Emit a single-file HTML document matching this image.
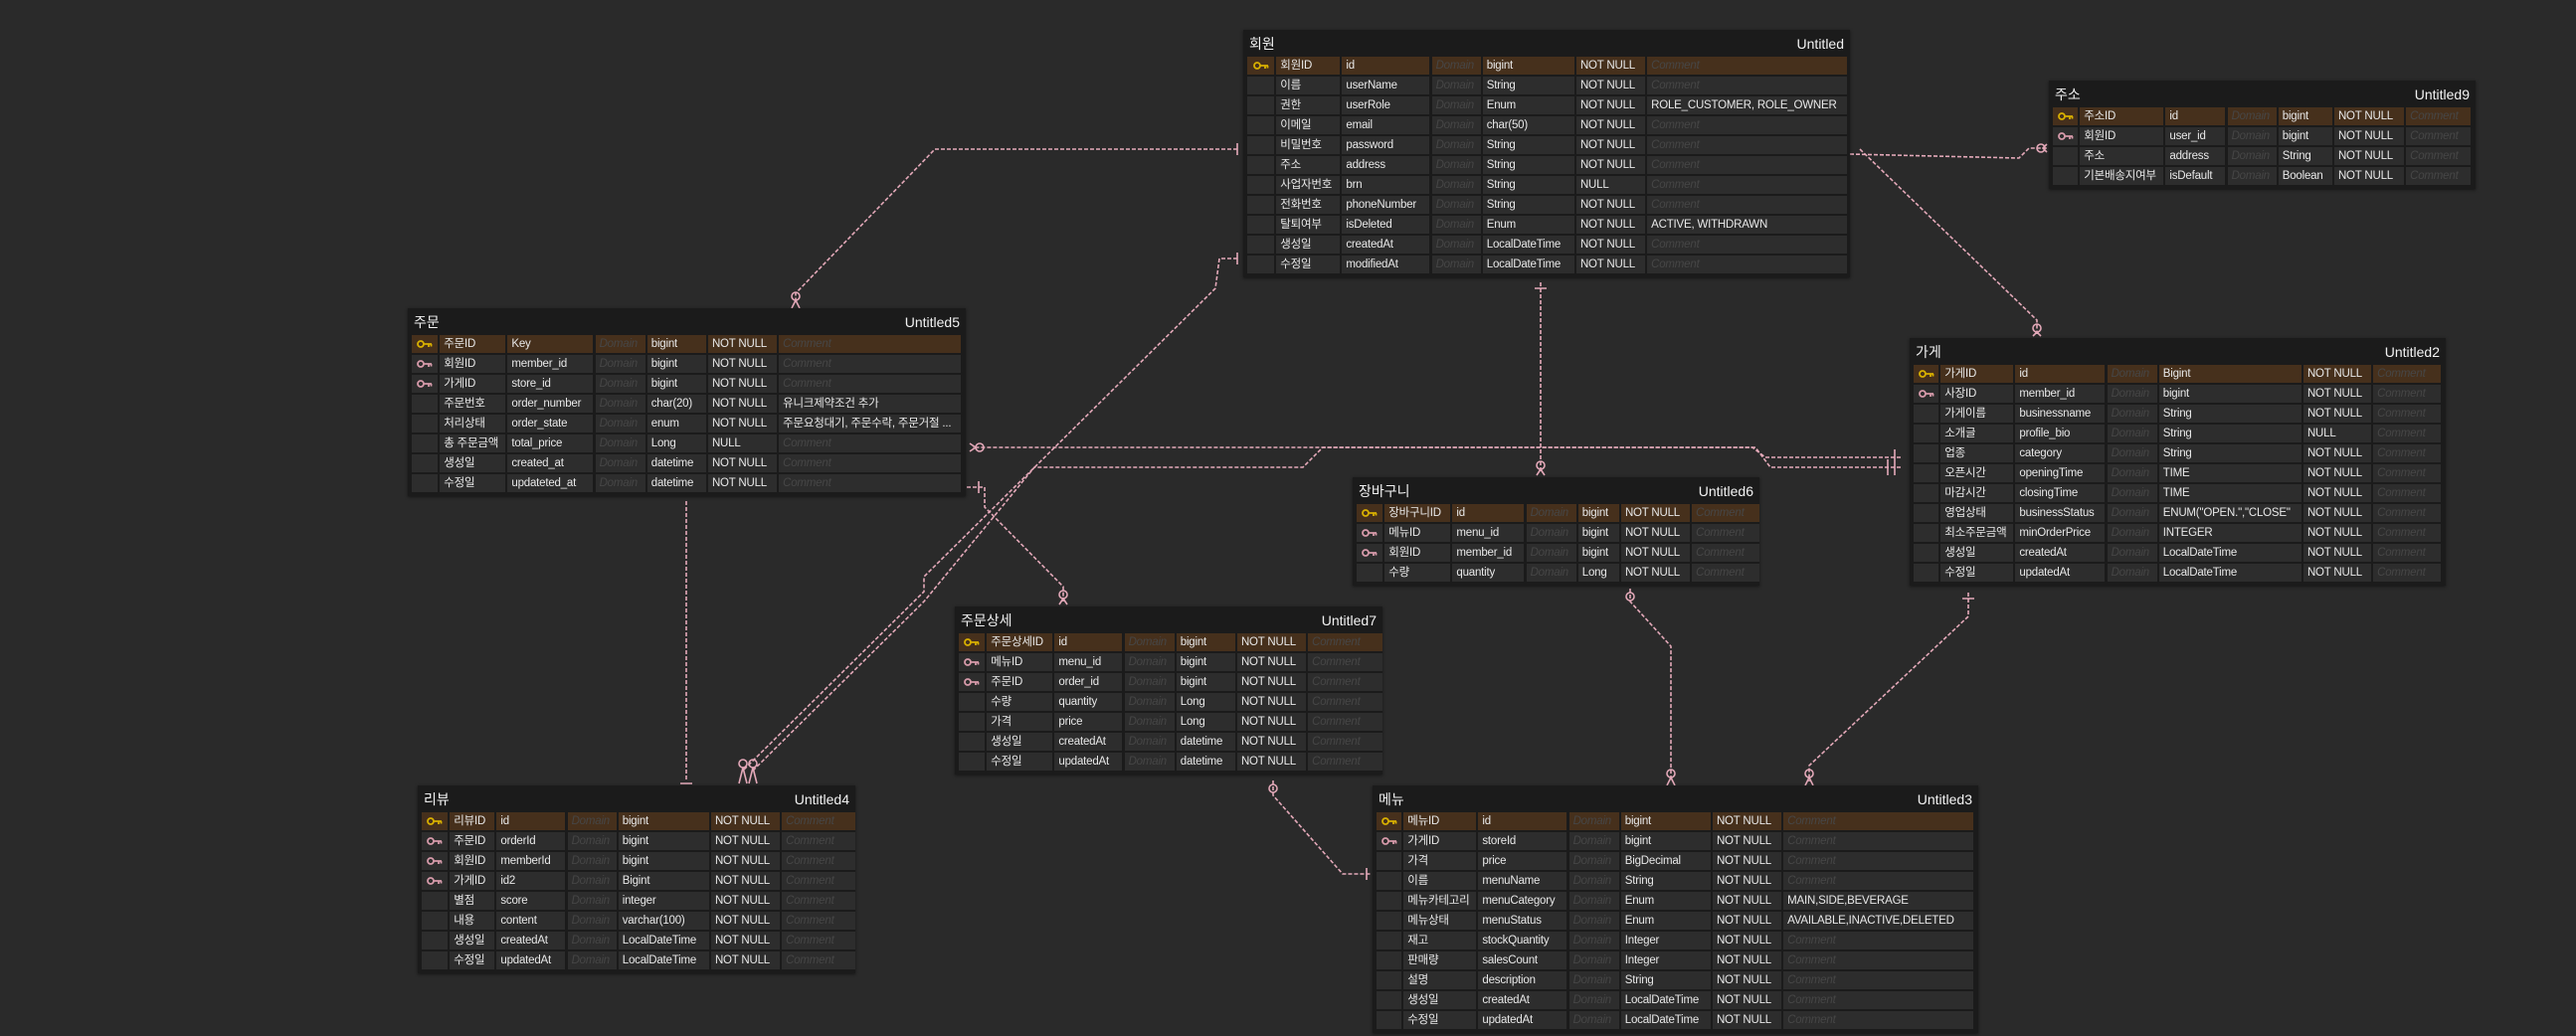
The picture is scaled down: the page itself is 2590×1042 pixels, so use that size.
<!DOCTYPE html>
<html><head><meta charset="utf-8">
<style>
html,body{margin:0;padding:0;}
body{width:2590px;height:1042px;background:#2a2a2a;position:relative;overflow:hidden;font-family:"Liberation Sans","Noto Sans CJK KR",sans-serif;}
svg.lines{position:absolute;left:0;top:0;z-index:0}
.t{position:absolute;background:#1b1b1b;z-index:1;box-shadow:0 1px 3px rgba(0,0,0,.5)}
.h{height:27px;display:flex;justify-content:space-between;align-items:center;padding:0 6px 0 6px;color:#f2f2f2;font-size:14px;box-sizing:border-box}
.g{display:grid;column-gap:2.2px;row-gap:2px;padding:0 3px 3px 4px;grid-auto-rows:18px}
.g div{background:#2d2d2d;color:#e8e8e8;font-size:11.5px;letter-spacing:-0.2px;line-height:18px;padding-left:4px;white-space:nowrap;overflow:hidden;box-sizing:border-box}
.g div.p{color:#464646;font-style:italic}
.g.pk0 div:nth-child(-n+7){background:#46301c}
.g div.ic{padding:0;display:flex;align-items:center;justify-content:center}
.k{color:#d8b000}.f{color:#d69aaa}
</style></head><body>
<svg class="lines" width="2590" height="1042" fill="none" stroke="#e4a9b9" stroke-width="1.6">
<g stroke-dasharray="4 2">
<path d="M1244 150 H940 L800 295 V303"/>
<path d="M1244 260 H1226 L1222 290 L929 580 V595 L747 775"/>
<path d="M1911 470 H1780 L1765 450 H1330 L1310 470 H1040 L929 605 L757 775"/>
<path d="M1911 460 H1775 L1762 450 H978"/>
<path d="M972 490 H990 V510 L1069 590 V605"/>
<path d="M1549 284 V476"/>
<path d="M1639 592 V605 L1680 650 V786"/>
<path d="M1979 596 V620 L1819 770 V786"/>
<path d="M1280 785 V800 L1350 879 H1378"/>
<path d="M690 504 V786"/>
<path d="M1860 155 L2030 159 L2040 149 H2058"/>
<path d="M1870 150 L2048 322 V336"/>
</g>
<g stroke-width="1.6">
<path d="M1244 144 V156 M1244 254 V266 M1854 148 V160 M1858 145 V165"/>
<path d="M1905 452 V468 M1905 463 V478 M1898 462 V478"/>
<path d="M684 498 H696 M684 788 H696 M984 484 V496 M1543 290 H1555 M1973 602 H1985 M1374 873 V885"/>
<circle cx="800" cy="298" r="4"/><circle cx="747" cy="768" r="4"/><circle cx="757" cy="768" r="4"/>
<circle cx="985" cy="450" r="4"/><circle cx="1069" cy="598" r="4"/><circle cx="1549" cy="468" r="4"/>
<circle cx="1639" cy="600" r="4"/><circle cx="1680" cy="778" r="4"/><circle cx="1819" cy="778" r="4"/>
<circle cx="1280" cy="793" r="4"/><circle cx="2048" cy="330" r="4"/><circle cx="2052" cy="149" r="4"/>
<path d="M796 310 L800 302 L804 310 M743 788 L747 772 L751 788 M753 788 L757 772 L761 788 M1065 608 L1069 602 L1073 608 M1545 478 L1549 472 L1553 478 M1676 790 L1680 782 L1684 790 M1815 790 L1819 782 L1823 790 M2044 338 L2048 334 L2052 338 M2058 145 L2054 149 L2058 153 M975 446 L981 450 L975 454"/>
</g>
</svg>

<!-- 회원 -->
<div class="t" style="left:1250px;top:30px;width:610px;height:249px">
<div class="h"><span>회원</span><span>Untitled</span></div>
<div class="g pk0" style="grid-template-columns:27px 64px 88px 49px 92px 69px 201px">
<div class="ic"><svg class="k" width="16" height="10" viewBox="0 0 16 10"><circle cx="4" cy="5" r="3" fill="none" stroke="currentColor" stroke-width="1.8"/><path d="M7 5h8M12 5v3M14.5 5v2.5" stroke="currentColor" stroke-width="1.8" fill="none"/></svg></div><div>회원ID</div><div>id</div><div class="p">Domain</div><div>bigint</div><div>NOT NULL</div><div class="p">Comment</div>
<div></div><div>이름</div><div>userName</div><div class="p">Domain</div><div>String</div><div>NOT NULL</div><div class="p">Comment</div>
<div></div><div>권한</div><div>userRole</div><div class="p">Domain</div><div>Enum</div><div>NOT NULL</div><div>ROLE_CUSTOMER, ROLE_OWNER</div>
<div></div><div>이메일</div><div>email</div><div class="p">Domain</div><div>char(50)</div><div>NOT NULL</div><div class="p">Comment</div>
<div></div><div>비밀번호</div><div>password</div><div class="p">Domain</div><div>String</div><div>NOT NULL</div><div class="p">Comment</div>
<div></div><div>주소</div><div>address</div><div class="p">Domain</div><div>String</div><div>NOT NULL</div><div class="p">Comment</div>
<div></div><div>사업자번호</div><div>brn</div><div class="p">Domain</div><div>String</div><div>NULL</div><div class="p">Comment</div>
<div></div><div>전화번호</div><div>phoneNumber</div><div class="p">Domain</div><div>String</div><div>NOT NULL</div><div class="p">Comment</div>
<div></div><div>탈퇴여부</div><div>isDeleted</div><div class="p">Domain</div><div>Enum</div><div>NOT NULL</div><div>ACTIVE, WITHDRAWN</div>
<div></div><div>생성일</div><div>createdAt</div><div class="p">Domain</div><div>LocalDateTime</div><div>NOT NULL</div><div class="p">Comment</div>
<div></div><div>수정일</div><div>modifiedAt</div><div class="p">Domain</div><div>LocalDateTime</div><div>NOT NULL</div><div class="p">Comment</div>
</div></div>

<!-- 주소 -->
<div class="t" style="left:2060px;top:81px;width:429px;height:109px">
<div class="h"><span>주소</span><span>Untitled9</span></div>
<div class="g pk0" style="grid-template-columns:25px 84px 60px 49px 54px 70px 65px">
<div class="ic"><svg class="k" width="16" height="10" viewBox="0 0 16 10"><circle cx="4" cy="5" r="3" fill="none" stroke="currentColor" stroke-width="1.8"/><path d="M7 5h8M12 5v3M14.5 5v2.5" stroke="currentColor" stroke-width="1.8" fill="none"/></svg></div><div>주소ID</div><div>id</div><div class="p">Domain</div><div>bigint</div><div>NOT NULL</div><div class="p">Comment</div>
<div class="ic"><svg class="f" width="16" height="10" viewBox="0 0 16 10"><circle cx="4" cy="5" r="3" fill="none" stroke="currentColor" stroke-width="1.8"/><path d="M7 5h8M12 5v3M14.5 5v2.5" stroke="currentColor" stroke-width="1.8" fill="none"/></svg></div><div>회원ID</div><div>user_id</div><div class="p">Domain</div><div>bigint</div><div>NOT NULL</div><div class="p">Comment</div>
<div></div><div>주소</div><div>address</div><div class="p">Domain</div><div>String</div><div>NOT NULL</div><div class="p">Comment</div>
<div></div><div>기본배송지여부</div><div>isDefault</div><div class="p">Domain</div><div>Boolean</div><div>NOT NULL</div><div class="p">Comment</div>
</div></div>

<!-- 주문 -->
<div class="t" style="left:410px;top:310px;width:561px;height:189px">
<div class="h"><span>주문</span><span>Untitled5</span></div>
<div class="g pk0" style="grid-template-columns:26px 66px 86px 50px 59px 69px 183px">
<div class="ic"><svg class="k" width="16" height="10" viewBox="0 0 16 10"><circle cx="4" cy="5" r="3" fill="none" stroke="currentColor" stroke-width="1.8"/><path d="M7 5h8M12 5v3M14.5 5v2.5" stroke="currentColor" stroke-width="1.8" fill="none"/></svg></div><div>주문ID</div><div>Key</div><div class="p">Domain</div><div>bigint</div><div>NOT NULL</div><div class="p">Comment</div>
<div class="ic"><svg class="f" width="16" height="10" viewBox="0 0 16 10"><circle cx="4" cy="5" r="3" fill="none" stroke="currentColor" stroke-width="1.8"/><path d="M7 5h8M12 5v3M14.5 5v2.5" stroke="currentColor" stroke-width="1.8" fill="none"/></svg></div><div>회원ID</div><div>member_id</div><div class="p">Domain</div><div>bigint</div><div>NOT NULL</div><div class="p">Comment</div>
<div class="ic"><svg class="f" width="16" height="10" viewBox="0 0 16 10"><circle cx="4" cy="5" r="3" fill="none" stroke="currentColor" stroke-width="1.8"/><path d="M7 5h8M12 5v3M14.5 5v2.5" stroke="currentColor" stroke-width="1.8" fill="none"/></svg></div><div>가게ID</div><div>store_id</div><div class="p">Domain</div><div>bigint</div><div>NOT NULL</div><div class="p">Comment</div>
<div></div><div>주문번호</div><div>order_number</div><div class="p">Domain</div><div>char(20)</div><div>NOT NULL</div><div>유니크제약조건 추가</div>
<div></div><div>처리상태</div><div>order_state</div><div class="p">Domain</div><div>enum</div><div>NOT NULL</div><div>주문요청대기, 주문수락, 주문거절 ...</div>
<div></div><div>총 주문금액</div><div>total_price</div><div class="p">Domain</div><div>Long</div><div>NULL</div><div class="p">Comment</div>
<div></div><div>생성일</div><div>created_at</div><div class="p">Domain</div><div>datetime</div><div>NOT NULL</div><div class="p">Comment</div>
<div></div><div>수정일</div><div>updateted_at</div><div class="p">Domain</div><div>datetime</div><div>NOT NULL</div><div class="p">Comment</div>
</div></div>

<!-- 가게 -->
<div class="t" style="left:1920px;top:340px;width:539px;height:249px">
<div class="h"><span>가게</span><span>Untitled2</span></div>
<div class="g pk0" style="grid-template-columns:25px 73px 90px 50px 143px 68px 68px">
<div class="ic"><svg class="k" width="16" height="10" viewBox="0 0 16 10"><circle cx="4" cy="5" r="3" fill="none" stroke="currentColor" stroke-width="1.8"/><path d="M7 5h8M12 5v3M14.5 5v2.5" stroke="currentColor" stroke-width="1.8" fill="none"/></svg></div><div>가게ID</div><div>id</div><div class="p">Domain</div><div>Bigint</div><div>NOT NULL</div><div class="p">Comment</div>
<div class="ic"><svg class="f" width="16" height="10" viewBox="0 0 16 10"><circle cx="4" cy="5" r="3" fill="none" stroke="currentColor" stroke-width="1.8"/><path d="M7 5h8M12 5v3M14.5 5v2.5" stroke="currentColor" stroke-width="1.8" fill="none"/></svg></div><div>사장ID</div><div>member_id</div><div class="p">Domain</div><div>bigint</div><div>NOT NULL</div><div class="p">Comment</div>
<div></div><div>가게이름</div><div>businessname</div><div class="p">Domain</div><div>String</div><div>NOT NULL</div><div class="p">Comment</div>
<div></div><div>소개글</div><div>profile_bio</div><div class="p">Domain</div><div>String</div><div>NULL</div><div class="p">Comment</div>
<div></div><div>업종</div><div>category</div><div class="p">Domain</div><div>String</div><div>NOT NULL</div><div class="p">Comment</div>
<div></div><div>오픈시간</div><div>openingTime</div><div class="p">Domain</div><div>TIME</div><div>NOT NULL</div><div class="p">Comment</div>
<div></div><div>마감시간</div><div>closingTime</div><div class="p">Domain</div><div>TIME</div><div>NOT NULL</div><div class="p">Comment</div>
<div></div><div>영업상태</div><div>businessStatus</div><div class="p">Domain</div><div>ENUM("OPEN.","CLOSE"</div><div>NOT NULL</div><div class="p">Comment</div>
<div></div><div>최소주문금액</div><div>minOrderPrice</div><div class="p">Domain</div><div>INTEGER</div><div>NOT NULL</div><div class="p">Comment</div>
<div></div><div>생성일</div><div>createdAt</div><div class="p">Domain</div><div>LocalDateTime</div><div>NOT NULL</div><div class="p">Comment</div>
<div></div><div>수정일</div><div>updatedAt</div><div class="p">Domain</div><div>LocalDateTime</div><div>NOT NULL</div><div class="p">Comment</div>
</div></div>

<!-- 장바구니 -->
<div class="t" style="left:1360px;top:480px;width:409px;height:109px">
<div class="h"><span>장바구니</span><span>Untitled6</span></div>
<div class="g pk0" style="grid-template-columns:26px 66px 72px 50px 41px 69px 68px">
<div class="ic"><svg class="k" width="16" height="10" viewBox="0 0 16 10"><circle cx="4" cy="5" r="3" fill="none" stroke="currentColor" stroke-width="1.8"/><path d="M7 5h8M12 5v3M14.5 5v2.5" stroke="currentColor" stroke-width="1.8" fill="none"/></svg></div><div>장바구니ID</div><div>id</div><div class="p">Domain</div><div>bigint</div><div>NOT NULL</div><div class="p">Comment</div>
<div class="ic"><svg class="f" width="16" height="10" viewBox="0 0 16 10"><circle cx="4" cy="5" r="3" fill="none" stroke="currentColor" stroke-width="1.8"/><path d="M7 5h8M12 5v3M14.5 5v2.5" stroke="currentColor" stroke-width="1.8" fill="none"/></svg></div><div>메뉴ID</div><div>menu_id</div><div class="p">Domain</div><div>bigint</div><div>NOT NULL</div><div class="p">Comment</div>
<div class="ic"><svg class="f" width="16" height="10" viewBox="0 0 16 10"><circle cx="4" cy="5" r="3" fill="none" stroke="currentColor" stroke-width="1.8"/><path d="M7 5h8M12 5v3M14.5 5v2.5" stroke="currentColor" stroke-width="1.8" fill="none"/></svg></div><div>회원ID</div><div>member_id</div><div class="p">Domain</div><div>bigint</div><div>NOT NULL</div><div class="p">Comment</div>
<div></div><div>수량</div><div>quantity</div><div class="p">Domain</div><div>Long</div><div>NOT NULL</div><div class="p">Comment</div>
</div></div>

<!-- 주문상세 -->
<div class="t" style="left:960px;top:610px;width:430px;height:169px">
<div class="h"><span>주문상세</span><span>Untitled7</span></div>
<div class="g pk0" style="grid-template-columns:26px 66px 68px 50px 59px 69px 75px">
<div class="ic"><svg class="k" width="16" height="10" viewBox="0 0 16 10"><circle cx="4" cy="5" r="3" fill="none" stroke="currentColor" stroke-width="1.8"/><path d="M7 5h8M12 5v3M14.5 5v2.5" stroke="currentColor" stroke-width="1.8" fill="none"/></svg></div><div>주문상세ID</div><div>id</div><div class="p">Domain</div><div>bigint</div><div>NOT NULL</div><div class="p">Comment</div>
<div class="ic"><svg class="f" width="16" height="10" viewBox="0 0 16 10"><circle cx="4" cy="5" r="3" fill="none" stroke="currentColor" stroke-width="1.8"/><path d="M7 5h8M12 5v3M14.5 5v2.5" stroke="currentColor" stroke-width="1.8" fill="none"/></svg></div><div>메뉴ID</div><div>menu_id</div><div class="p">Domain</div><div>bigint</div><div>NOT NULL</div><div class="p">Comment</div>
<div class="ic"><svg class="f" width="16" height="10" viewBox="0 0 16 10"><circle cx="4" cy="5" r="3" fill="none" stroke="currentColor" stroke-width="1.8"/><path d="M7 5h8M12 5v3M14.5 5v2.5" stroke="currentColor" stroke-width="1.8" fill="none"/></svg></div><div>주문ID</div><div>order_id</div><div class="p">Domain</div><div>bigint</div><div>NOT NULL</div><div class="p">Comment</div>
<div></div><div>수량</div><div>quantity</div><div class="p">Domain</div><div>Long</div><div>NOT NULL</div><div class="p">Comment</div>
<div></div><div>가격</div><div>price</div><div class="p">Domain</div><div>Long</div><div>NOT NULL</div><div class="p">Comment</div>
<div></div><div>생성일</div><div>createdAt</div><div class="p">Domain</div><div>datetime</div><div>NOT NULL</div><div class="p">Comment</div>
<div></div><div>수정일</div><div>updatedAt</div><div class="p">Domain</div><div>datetime</div><div>NOT NULL</div><div class="p">Comment</div>
</div></div>

<!-- 리뷰 -->
<div class="t" style="left:420px;top:790px;width:440px;height:189px">
<div class="h"><span>리뷰</span><span>Untitled4</span></div>
<div class="g pk0" style="grid-template-columns:26px 45px 69px 49px 91px 69px 74px">
<div class="ic"><svg class="k" width="16" height="10" viewBox="0 0 16 10"><circle cx="4" cy="5" r="3" fill="none" stroke="currentColor" stroke-width="1.8"/><path d="M7 5h8M12 5v3M14.5 5v2.5" stroke="currentColor" stroke-width="1.8" fill="none"/></svg></div><div>리뷰ID</div><div>id</div><div class="p">Domain</div><div>bigint</div><div>NOT NULL</div><div class="p">Comment</div>
<div class="ic"><svg class="f" width="16" height="10" viewBox="0 0 16 10"><circle cx="4" cy="5" r="3" fill="none" stroke="currentColor" stroke-width="1.8"/><path d="M7 5h8M12 5v3M14.5 5v2.5" stroke="currentColor" stroke-width="1.8" fill="none"/></svg></div><div>주문ID</div><div>orderId</div><div class="p">Domain</div><div>bigint</div><div>NOT NULL</div><div class="p">Comment</div>
<div class="ic"><svg class="f" width="16" height="10" viewBox="0 0 16 10"><circle cx="4" cy="5" r="3" fill="none" stroke="currentColor" stroke-width="1.8"/><path d="M7 5h8M12 5v3M14.5 5v2.5" stroke="currentColor" stroke-width="1.8" fill="none"/></svg></div><div>회원ID</div><div>memberId</div><div class="p">Domain</div><div>bigint</div><div>NOT NULL</div><div class="p">Comment</div>
<div class="ic"><svg class="f" width="16" height="10" viewBox="0 0 16 10"><circle cx="4" cy="5" r="3" fill="none" stroke="currentColor" stroke-width="1.8"/><path d="M7 5h8M12 5v3M14.5 5v2.5" stroke="currentColor" stroke-width="1.8" fill="none"/></svg></div><div>가게ID</div><div>id2</div><div class="p">Domain</div><div>Bigint</div><div>NOT NULL</div><div class="p">Comment</div>
<div></div><div>별점</div><div>score</div><div class="p">Domain</div><div>integer</div><div>NOT NULL</div><div class="p">Comment</div>
<div></div><div>내용</div><div>content</div><div class="p">Domain</div><div>varchar(100)</div><div>NOT NULL</div><div class="p">Comment</div>
<div></div><div>생성일</div><div>createdAt</div><div class="p">Domain</div><div>LocalDateTime</div><div>NOT NULL</div><div class="p">Comment</div>
<div></div><div>수정일</div><div>updatedAt</div><div class="p">Domain</div><div>LocalDateTime</div><div>NOT NULL</div><div class="p">Comment</div>
</div></div>

<!-- 메뉴 -->
<div class="t" style="left:1380px;top:790px;width:609px;height:249px">
<div class="h"><span>메뉴</span><span>Untitled3</span></div>
<div class="g pk0" style="grid-template-columns:25px 73px 89px 50px 90px 69px 191px">
<div class="ic"><svg class="k" width="16" height="10" viewBox="0 0 16 10"><circle cx="4" cy="5" r="3" fill="none" stroke="currentColor" stroke-width="1.8"/><path d="M7 5h8M12 5v3M14.5 5v2.5" stroke="currentColor" stroke-width="1.8" fill="none"/></svg></div><div>메뉴ID</div><div>id</div><div class="p">Domain</div><div>bigint</div><div>NOT NULL</div><div class="p">Comment</div>
<div class="ic"><svg class="f" width="16" height="10" viewBox="0 0 16 10"><circle cx="4" cy="5" r="3" fill="none" stroke="currentColor" stroke-width="1.8"/><path d="M7 5h8M12 5v3M14.5 5v2.5" stroke="currentColor" stroke-width="1.8" fill="none"/></svg></div><div>가게ID</div><div>storeId</div><div class="p">Domain</div><div>bigint</div><div>NOT NULL</div><div class="p">Comment</div>
<div></div><div>가격</div><div>price</div><div class="p">Domain</div><div>BigDecimal</div><div>NOT NULL</div><div class="p">Comment</div>
<div></div><div>이름</div><div>menuName</div><div class="p">Domain</div><div>String</div><div>NOT NULL</div><div class="p">Comment</div>
<div></div><div>메뉴카테고리</div><div>menuCategory</div><div class="p">Domain</div><div>Enum</div><div>NOT NULL</div><div>MAIN,SIDE,BEVERAGE</div>
<div></div><div>메뉴상태</div><div>menuStatus</div><div class="p">Domain</div><div>Enum</div><div>NOT NULL</div><div>AVAILABLE,INACTIVE,DELETED</div>
<div></div><div>재고</div><div>stockQuantity</div><div class="p">Domain</div><div>Integer</div><div>NOT NULL</div><div class="p">Comment</div>
<div></div><div>판매량</div><div>salesCount</div><div class="p">Domain</div><div>Integer</div><div>NOT NULL</div><div class="p">Comment</div>
<div></div><div>설명</div><div>description</div><div class="p">Domain</div><div>String</div><div>NOT NULL</div><div class="p">Comment</div>
<div></div><div>생성일</div><div>createdAt</div><div class="p">Domain</div><div>LocalDateTime</div><div>NOT NULL</div><div class="p">Comment</div>
<div></div><div>수정일</div><div>updatedAt</div><div class="p">Domain</div><div>LocalDateTime</div><div>NOT NULL</div><div class="p">Comment</div>
</div></div>

</body></html>
